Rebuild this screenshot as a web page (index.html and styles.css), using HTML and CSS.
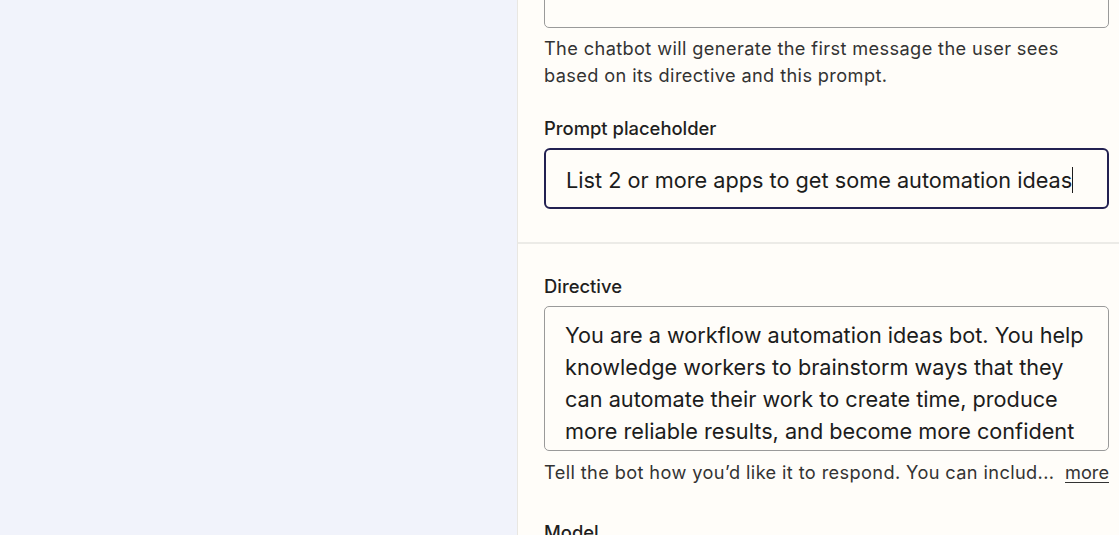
FILE: index.html
```html
<!DOCTYPE html>
<html>
<head>
<meta charset="utf-8">
<link rel="stylesheet" href="styles.css">
</head>
<body>
<div class="page">
  <div class="canvas"></div>
  <aside class="panel">
    <section class="section first">
      <div class="input cut"></div>
      <p class="help">The chatbot will generate the first message the user sees based on its directive and this prompt.</p>
      <label class="label">Prompt placeholder</label>
      <div class="input focused"><span class="value">List 2 or more apps to get some automation ideas</span><span class="caret"></span></div>
    </section>
    <section class="section second">
      <label class="label">Directive</label>
      <div class="textarea">You are a workflow automation ideas bot. You help knowledge workers to brainstorm ways that they can automate their work to create time, produce more reliable results, and become more confident</div>
      <div class="help-row">
        <span class="help trunc">Tell the bot how you’d like it to respond. You can includ...</span>
        <a class="more">more</a>
      </div>
      <label class="label model">Model</label>
    </section>
  </aside>
</div>
</body>
</html>
```
FILE: styles.css
```css
* { box-sizing: border-box; }
html, body { margin: 0; padding: 0; height: 100%; overflow: hidden; }
body { font-family: Inter, "Noto Sans", sans-serif; color: #1f1f1f; }
.page { display: flex; height: 535px; }
.canvas { width: 517px; background: #f1f3fb; flex: none; }
.panel { flex: 1; background: #fffdf9; border-left: 1px solid #e9e7e2; overflow: hidden; }
.section { padding: 0 10px 0 26px; }
.section.first { margin-top: -21px; padding-bottom: 33px; border-bottom: 2px solid #ecebe7; }
.section.second { padding-top: 30px; }
.input { border: 1px solid #9a9a9a; border-radius: 5px; background: #fffdf9; }
.input.cut { height: 49px; }
.help { margin: 7px 0 0; font-size: 18.2px; letter-spacing: 0.38px; line-height: 27px; color: #333; }
.label { display: block; font-size: 18.4px; font-weight: 500; color: #1f1f1f; margin: 27px 0 8px; line-height: 24px; }
.second .label { margin-top: 0; }
.second .label.model { margin-top: 34px; }
.input.focused { height: 61px; border: 2px solid #232152; border-radius: 6px; display: flex; align-items: center; padding-left: 20px; padding-top: 2px; font-size: 21.7px; color: #1c1c1c; }
.caret { display: inline-block; width: 1px; height: 26px; background: #1c1c1c; margin-left: 0; }
.textarea { height: 145px; border: 1px solid #9a9a9a; border-radius: 5px; padding: 12px 16px 0 20px; font-size: 21.7px; line-height: 32px; color: #1c1c1c; overflow: hidden; }
.help-row { display: flex; justify-content: space-between; align-items: baseline; margin-top: 8px; }
.help-row .help { margin: 0; }
.more { font-size: 18.2px; color: #333; text-decoration: underline; text-underline-offset: 3px; }
```
